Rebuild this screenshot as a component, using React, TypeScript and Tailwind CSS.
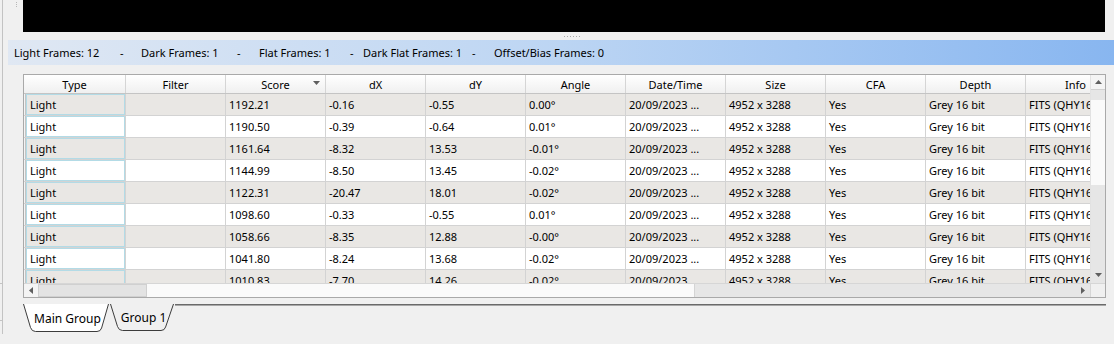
const rows = [
  ["1192.21", "-0.16", "-0.55", "0.00°"],
  ["1190.50", "-0.39", "-0.64", "0.01°"],
  ["1161.64", "-8.32", "13.53", "-0.01°"],
  ["1144.99", "-8.50", "13.45", "-0.02°"],
  ["1122.31", "-20.47", "18.01", "-0.02°"],
  ["1098.60", "-0.33", "-0.55", "0.01°"],
  ["1058.66", "-8.35", "12.88", "-0.00°"],
  ["1041.80", "-8.24", "13.68", "-0.02°"],
  ["1010.83", "-7.70", "14.26", "-0.02°"],
];

const headers = ["Filter", "Score", "dX", "dY", "Angle", "Date/Time", "Size", "CFA", "Depth", "Info"];

function Arrow({ dir }: { dir: "up" | "down" | "left" | "right" }) {
  const d = {
    up: "M0 4 L3.5 0 L7 4Z",
    down: "M0 0 L7 0 L3.5 4Z",
    left: "M4 0 L4 7 L0 3.5Z",
    right: "M0 0 L4 3.5 L0 7Z",
  }[dir];
  const vert = dir === "up" || dir === "down";
  return (
    <svg width={vert ? 7 : 4} height={vert ? 4 : 7} viewBox={vert ? "0 0 7 4" : "0 0 4 7"}>
      <path d={d} fill="#5f5f5f" />
    </svg>
  );
}

function Row({ data, i }: { data: string[]; i: number }) {
  const bg = i % 2 === 0 ? "bg-[#e9e7e4]" : "bg-white";
  // Filter, Score, dX, dY, Angle, Date/Time, Size, CFA, Depth, Info
  const cells = ["", data[0], data[1], data[2], data[3], "20/09/2023 ...", "4952 x 3288", "Yes", "Grey 16 bit", "FITS (QHY168C)"];
  return (
    <div className={`flex h-[22px] shrink-0 border-b border-[#d3d3d3] ${bg}`}>
      <div className="flex w-[102px] shrink-0 border-r border-[#d3d3d3]">
        <div className="w-px bg-[#f4f4f4]" />
        <div className="w-px bg-[#c4c4c4]" />
        <div className="flex flex-1 items-center border border-[#b3dbe6] pl-[3px]">Light</div>
      </div>
      {cells.map((c, k) => (
        <div key={k} className="flex w-[100px] shrink-0 items-center overflow-hidden whitespace-nowrap border-r border-[#d3d3d3] pl-[3px]">
          {c}
        </div>
      ))}
    </div>
  );
}

export default function App() {
  return (
    <div className="flex h-[344px] w-[1114px] overflow-hidden bg-[#f0f0f0] font-['Noto_Sans',sans-serif] text-[11px] leading-none text-black">
      {/* left panel edge */}
      <div className="flex w-[8px] shrink-0">
        <div className="relative h-[334px] w-[3px] border-r border-[#c3c3c3]">
          <div className="absolute left-0 top-[283px] h-px w-[3px] bg-[#c3c3c3]" />
          <div className="absolute left-0 top-[320px] h-px w-[3px] bg-[#c3c3c3]" />
        </div>
      </div>

      <div className="flex flex-1 flex-col">
        {/* preview */}
        <div className="flex h-[32px] shrink-0">
          <div className="flex w-[15px] flex-col items-center gap-[1px] pt-[2px] pl-[2px]">
            <div className="h-px w-px bg-[#b8b8b8]" />
            <div className="h-px w-px bg-[#b8b8b8]" />
            <div className="h-px w-px bg-[#b8b8b8]" />
          </div>
          <div className="h-[32px] w-[1082px] bg-black" />
        </div>

        {/* splitter */}
        <div className="flex h-[8px] shrink-0 items-center justify-center">
          <div className="ml-[22px] flex gap-[2px]">
            {[0, 1, 2, 3, 4, 5].map((k) => (
              <div key={k} className="h-px w-px bg-[#a8a8a8]" />
            ))}
          </div>
        </div>

        {/* summary bar */}
        <div className="flex h-[25px] shrink-0 items-center whitespace-nowrap bg-gradient-to-r from-[#e0e8f3] via-[#bcd5f3] to-[#88b6f0] pl-[6px]">
          <span className="w-[106px] shrink-0">Light Frames: 12</span>
          <span className="w-[21px] shrink-0">-</span>
          <span className="w-[96px] shrink-0">Dark Frames: 1</span>
          <span className="w-[22px] shrink-0">-</span>
          <span className="w-[91px] shrink-0">Flat Frames: 1</span>
          <span className="w-[13px] shrink-0">-</span>
          <span className="w-[109px] shrink-0">Dark Flat Frames: 1</span>
          <span className="w-[22px] shrink-0">-</span>
          <span>Offset/Bias Frames: 0</span>
        </div>

        {/* table */}
        <div className="ml-[15px] mt-[9px] flex h-[224px] w-[1083px] shrink-0 flex-col border border-[#a9a9a9] bg-white">
          <div className="flex h-[208px]">
            <div className="w-[1066px] overflow-hidden">
              <div className="flex h-[19px] border-b border-[#c4c4c4] bg-gradient-to-b from-white to-[#f0f0f0]">
                <div className="flex w-[102px] shrink-0 items-center justify-center border-r border-[#d5d5d5]">Type</div>
                {headers.map((h) => (
                  <div key={h} className="relative flex w-[100px] shrink-0 items-center justify-center border-r border-[#d5d5d5]">
                    {h}
                    {h === "Score" && (
                      <div className="absolute right-[5px] top-[6px] flex">
                        <Arrow dir="down" />
                      </div>
                    )}
                  </div>
                ))}
              </div>
              {rows.map((r, i) => (
                <Row key={i} data={r} i={i} />
              ))}
            </div>
            {/* vertical scrollbar */}
            <div className="flex w-[15px] flex-col border-l border-[#e2e2e2] bg-[#e8e8e8]">
              <div className="flex h-[14px] items-center justify-center bg-[#f4f4f4]">
                <Arrow dir="up" />
              </div>
              <div className="h-[11px] border-t border-[#d0d0d0] bg-[#e6e6e6]" />
              <div className="h-[85px] bg-[#fafafa]" />
              <div className="flex-1 bg-[#e6e6e6]" />
              <div className="flex h-[10px] items-start justify-center bg-[#e6e6e6]">
                <Arrow dir="down" />
              </div>
            </div>
          </div>
          {/* horizontal scrollbar */}
          <div className="flex h-[14px] border-t border-[#d6d6d6]">
            <div className="flex w-[1066px]">
              <div className="flex w-[14px] items-center justify-center bg-[#f4f4f4]">
                <Arrow dir="left" />
              </div>
              <div className="w-[109px] border border-[#d0d0d0] bg-[#e3e3e3]" />
              <div className="w-[547px] bg-[#fafafa]" />
              <div className="flex-1 border-l border-[#d4d4d4] bg-[#e6e6e6]" />
              <div className="flex w-[14px] items-center justify-center bg-[#e6e6e6]">
                <Arrow dir="right" />
              </div>
            </div>
            <div className="w-[15px] border-l border-[#d6d6d6] bg-[#f0f0f0]" />
          </div>
        </div>

        {/* tabs */}
        <div className="ml-[15px] mt-[6px] flex h-[30px] w-[1083px] shrink-0 items-start">
          <div className="relative flex h-[29px] w-[87px] shrink-0 items-center justify-center pl-[2px] text-[12px]">
            <svg className="absolute left-0 top-0" width="87" height="29" viewBox="0 0 87 29">
              <path d="M0.5 0 L7.5 23.5 Q8.8 27.5 12.5 27.5 L74 27.5 Q77.6 27.5 78.6 24 L85.5 0" fill="white" stroke="#3c3c3c" />
            </svg>
            <span className="relative">Main Group</span>
          </div>
          <div className="relative flex h-[28px] w-[65px] shrink-0 items-center justify-center pl-[2px] text-[12px]">
            <svg className="absolute left-0 top-0" width="65" height="28" viewBox="0 0 65 28">
              <path d="M0.5 0 L7.5 22.5 Q8.8 26.5 12.5 26.5 L51 26.5 Q54.6 26.5 55.6 23 L63.5 0" fill="#f0f0f0" stroke="#3c3c3c" />
            </svg>
            <span className="relative">Group 1</span>
          </div>
          <div className="h-[2px] flex-1 border-t border-[#6a6a6a] bg-[#a8a8a8]" />
        </div>
      </div>
    </div>
  );
}
